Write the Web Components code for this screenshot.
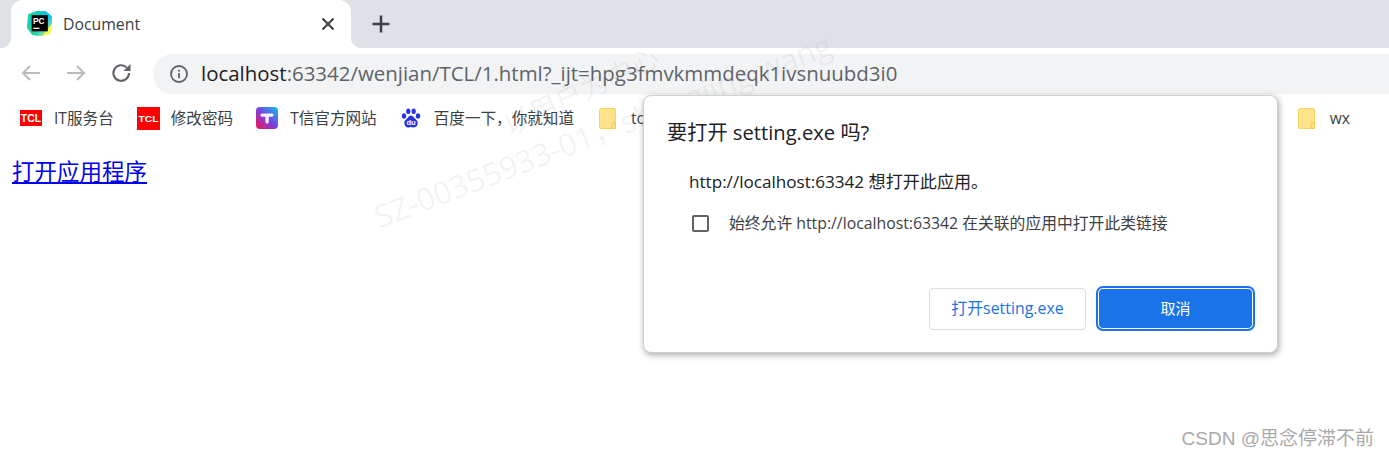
<!DOCTYPE html>
<html lang="zh-CN">
<head>
<meta charset="utf-8">
<title>Document</title>
<style>
html,body{margin:0;padding:0;width:1389px;height:457px;overflow:hidden;background:#fff;font-family:"Open Sans","Noto Sans CJK SC",sans-serif}
</style>
</head>
<body>
<browser-frame>
  <browser-tabstrip title-text="Document"></browser-tabstrip>
  <browser-toolbar></browser-toolbar>
  <bookmark-bar>
    <bookmark-item icon="tcl">IT服务台</bookmark-item>
    <bookmark-item icon="tcl2" style="margin-left:1px">修改密码</bookmark-item>
    <bookmark-item icon="t" style="margin-left:1px">T信官方网站</bookmark-item>
    <bookmark-item icon="baidu" style="margin-left:2px">百度一下，你就知道</bookmark-item>
    <bookmark-item icon="folder" style="margin-left:3px">tcl</bookmark-item>
    <bookmark-item icon="folder" slot="end">wx</bookmark-item>
  </bookmark-bar>
  <page-content></page-content>
</browser-frame>
<water-mark></water-mark>
<open-dialog></open-dialog>
<csdn-mark></csdn-mark>
<script>
function def(name, html, setup){
  customElements.define(name, class extends HTMLElement{
    constructor(){super();const r=this.attachShadow({mode:'open'});r.innerHTML=html;if(setup)setup.call(this,r);}
  });
}
const CJK='"Open Sans","Noto Sans CJK SC",sans-serif';
def('browser-frame',`<style>:host{display:flex;flex-direction:column;width:1389px;height:457px}</style><slot></slot>`);

def('browser-tabstrip',`<style>
:host{display:flex;align-items:stretch;height:48px;background:#dee1e6;padding-left:11px;box-sizing:border-box;font-family:${CJK}}
.tab{position:relative;width:340px;background:#fff;border-radius:12px 12px 0 0;display:flex;align-items:center;box-sizing:border-box;padding-left:16px}
.tab::before,.tab::after{content:"";position:absolute;bottom:0;width:11px;height:11px;background:radial-gradient(circle at var(--c) 0,#dee1e6 11px,#fff 11.5px)}
.tab::before{left:-11px;--c:0}
.tab::after{right:-11px;--c:100%}
.fav{width:25px;height:25px;flex:none;margin-top:-1px}
.t{margin-left:11px;font-size:15.800px;color:#3c4043;flex:1;margin-top:-1px}
.x{width:16px;height:16px;margin-right:15px;margin-top:-1px}
.plus{width:22px;height:22px;margin:13px 0 0 19px}
</style>
<div class="tab">
<svg class="fav" viewBox="0 0 24 24"><defs><linearGradient id="g" x1="0" y1="0" x2="1" y2="1"><stop offset="0" stop-color="#21d789"/><stop offset=".55" stop-color="#07c3f2"/><stop offset="1" stop-color="#fcf84a"/></linearGradient></defs>
<path d="M1 3 9 0h9l6 5v10l-2 7-8 2-9-1-5-7z" fill="url(#g)"/><path d="M14 24l8-2 2-7v-3l-7 9z" fill="#fcf84a"/><path d="M0 14l5 8 6 2-5-10z" fill="#21d789"/>
<rect x="4.500" y="4" width="15.500" height="15.500" fill="#000"/><text x="5.800" y="12.200" font-family="Liberation Sans" font-weight="700" font-size="8" fill="#fff">PC</text><rect x="6" y="16" width="6" height="1.200" fill="#fff"/></svg>
<span class="t"></span>
<svg class="x" viewBox="0 0 16 16"><path d="M2.500 2.500l11 11M13.500 2.500l-11 11" stroke="#3c4043" stroke-width="2.100" fill="none"/></svg>
</div>
<svg class="plus" viewBox="0 0 22 22"><path d="M11 2.500v17M2.500 11h17" stroke="#3c4043" stroke-width="2.500" fill="none"/></svg>`,
function(r){r.querySelector('.t').textContent=this.getAttribute('title-text')||'Document';});

def('browser-toolbar',`<style>
:host{display:flex;align-items:center;height:47px;background:#fff;box-sizing:border-box;padding:5px 0 0 19px;font-family:${CJK}}
svg.n{width:24px;height:24px;flex:none;margin:-2px 21px 0 0}
svg.r{margin:-2px 20px 0 1px}
.box{flex:1;height:40px;margin-left:-1px;background:#f1f3f4;border-radius:20px 0 0 20px;display:flex;align-items:center;padding-left:16px;box-sizing:border-box;overflow:hidden}
.i{width:20px;height:20px;flex:none;margin-right:12px}
.u{font-size:20.450px;color:#5f6368;white-space:nowrap;margin-top:-3px}
b{font-weight:400;color:#202124}
</style>
<svg class="n" viewBox="0 0 24 24"><path d="M21 12H4M11 5l-7 7 7 7" stroke="#b9bbbe" stroke-width="2" fill="none"/></svg>
<svg class="n" viewBox="0 0 24 24"><path d="M3 12h17M13 5l7 7-7 7" stroke="#b9bbbe" stroke-width="2" fill="none"/></svg>
<svg class="n r" viewBox="0 0 24 24"><path d="M19 12a7.800 7.800 0 1 1-2.300-5.500" stroke="#5f6368" stroke-width="2.100" fill="none"/><path d="M20.500 3v7h-7z" fill="#5f6368"/></svg>
<div class="box">
<svg class="i" viewBox="0 0 20 20"><circle cx="10" cy="10" r="8" stroke="#5f6368" stroke-width="1.800" fill="none"/><rect x="9.100" y="9" width="1.800" height="5.200" fill="#5f6368"/><rect x="9.100" y="5.800" width="1.800" height="1.800" fill="#5f6368"/></svg>
<span class="u"><b>localhost</b>:63342/wenjian/TCL/1.html?_ijt=hpg3fmvkmmdeqk1ivsnuubd3i0</span>
</div>`);

def('bookmark-bar',`<style>
:host{display:flex;align-items:center;height:46px;background:#fff;box-sizing:border-box;padding:0 39px 0 20px;font-family:${CJK}}
.a{display:flex;align-items:center;gap:22px}
.e{margin-left:auto;display:flex;align-items:center}
</style><div class="a"><slot></slot></div><div class="e"><slot name="end"></slot></div>`);

const icons={
tcl:`<svg width="22" height="16" viewBox="0 0 22 16"><rect width="22" height="16" fill="#f00"/><text x="11" y="12" text-anchor="middle" font-family="Liberation Sans" font-weight="700" font-size="10.500" fill="#fff">TCL</text></svg>`,
tcl2:`<svg width="23" height="23" viewBox="0 0 23 23"><rect width="23" height="23" fill="#f00"/><text x="11.500" y="15" text-anchor="middle" font-family="Liberation Sans" font-weight="700" font-size="9" textLength="20" lengthAdjust="spacingAndGlyphs" fill="#fff">TCL</text></svg>`,
t:`<svg width="22" height="22" viewBox="0 0 22 22"><defs><linearGradient id="tg" x1="0" y1="1" x2="1" y2="0"><stop offset="0" stop-color="#f5134e"/><stop offset=".5" stop-color="#7a3fe0"/><stop offset="1" stop-color="#06c8f0"/></linearGradient></defs><rect width="22" height="22" rx="4" fill="url(#tg)"/><path d="M6 6.500h10a1.300 1.300 0 0 1 0 3.200h-3.200V15a1.700 1.700 0 0 1-3.400 0V9.700H6a1.600 1.600 0 0 1 0-3.200z" fill="#fff" opacity=".92"/></svg>`,
baidu:`<svg width="20" height="20" viewBox="0 0 20 20" fill="#2932e1"><ellipse cx="3" cy="8" rx="2.200" ry="2.700"/><ellipse cx="7.300" cy="3.200" rx="2.100" ry="2.800"/><ellipse cx="12.700" cy="3.200" rx="2.100" ry="2.800"/><ellipse cx="17" cy="8" rx="2.200" ry="2.700"/><path d="M10 7.500c-2 0-3 2.200-4.500 3.500C4 12.300 2.800 14 3.500 16.500 4.200 19 6.500 19.500 8 19.500c1 0 1.500-.4 2-.4s1.200.4 2.200.4c1.800 0 3.900-.8 4.400-3 .6-2.600-.8-4.200-2.200-5.500C13 9.800 12 7.500 10 7.500z"/><text x="10" y="17" text-anchor="middle" font-family="Liberation Sans" font-weight="700" font-size="7.500" fill="#fff">du</text></svg>`,
folder:`<svg width="17" height="21" viewBox="0 0 17 21"><rect x=".5" y=".5" width="16" height="20" rx="1.500" fill="#fee38a" stroke="#f6d565"/><path d="M13 20.500v-4a1.500 1.500 0 0 1 3.500 0v4z" fill="#fee38a" stroke="#f0c94f"/></svg>`
};
def('bookmark-item',`<style>
:host{display:inline-flex;align-items:center;font-size:15.600px;color:#3c4043;white-space:nowrap;font-family:${CJK};line-height:22px}
.ic{display:flex;align-items:center;justify-content:center;margin-right:12px}
:host([icon=tcl2]) .ic{margin-right:11px}
:host([icon=baidu]) .ic{margin-right:13px}
:host([icon=folder]) .ic{margin-right:15px}
svg{display:block}
</style><span class="ic"></span><slot></slot>`,
function(r){r.querySelector('.ic').innerHTML=icons[this.getAttribute('icon')];});

def('page-content',`<style>
:host{display:block;padding:17px 12px 0;font-family:"Liberation Serif","Noto Sans CJK SC",serif;font-size:22.500px;line-height:30px}
a{color:#00e;text-decoration:underline}
</style><a href="#">打开应用程序</a>`);

def('water-mark',`<style>
:host{position:absolute;left:0;top:0;width:1389px;height:457px;overflow:hidden;pointer-events:none;font-family:${CJK}}
span{position:absolute;white-space:nowrap;color:rgba(120,120,120,.09);transform-origin:0 100%;transform:rotate(-21deg)}
.a{left:383px;top:192px;font-size:31px}
.b{left:513px;top:103px;font-size:28px;transform:rotate(-25deg)}
</style><span class="a">SZ-00355933-01，shangjing.wang</span><span class="b">以用户为中心</span>`);

def('open-dialog',`<style>
:host{position:absolute;left:643px;top:95px;width:635px;height:258px;box-sizing:border-box;background:#fff;border-radius:8px;border:1px solid #cfcfcf;box-shadow:1px 2px 6px rgba(60,64,67,.45);display:flex;flex-direction:column;padding:21px 22px 21px 23px;font-family:${CJK};color:#202124}
h1{margin:0;font-weight:400;font-size:20.200px;line-height:30px;color:#202124}
p{margin:23px 0 0 22px;font-size:17.100px;line-height:24px;color:#202124}
label{display:flex;align-items:center;margin:17px 0 0 25px;font-size:15.800px;line-height:24px;color:#3c4043}
.c{width:13px;height:13px;border:2px solid #5f6368;border-radius:2px;margin-right:20px;flex:none}
.btns{margin-top:auto;display:flex;justify-content:flex-end;align-items:center;gap:10px}
button{font:inherit;font-size:15.900px;height:42px;border-radius:4px;box-sizing:border-box;padding:0}
.o{width:157px;background:#fff;border:1px solid #dadce0;color:#1a73e8;padding-bottom:2px}
.p{width:155px;height:41px;margin:2px;background:#1a73e8;border:1px solid #fff;color:#fff;outline:2px solid #1a73e8;outline-offset:0;font-size:15px;padding-bottom:2px;border-radius:5px}
</style>
<h1>要打开 setting.exe 吗?</h1>
<p>http://localhost:63342 想打开此应用。</p>
<label><span class="c"></span>始终允许 http://localhost:63342 在关联的应用中打开此类链接</label>
<div class="btns"><button class="o">打开setting.exe</button><button class="p">取消</button></div>`);

def('csdn-mark',`<style>
:host{position:absolute;right:15px;top:427px;font-family:"Liberation Sans","Noto Sans CJK SC",sans-serif;font-size:19px;line-height:24px;color:#a9a9a9;white-space:nowrap}
</style>CSDN @思念停滞不前`);
</script>
</body>
</html>
